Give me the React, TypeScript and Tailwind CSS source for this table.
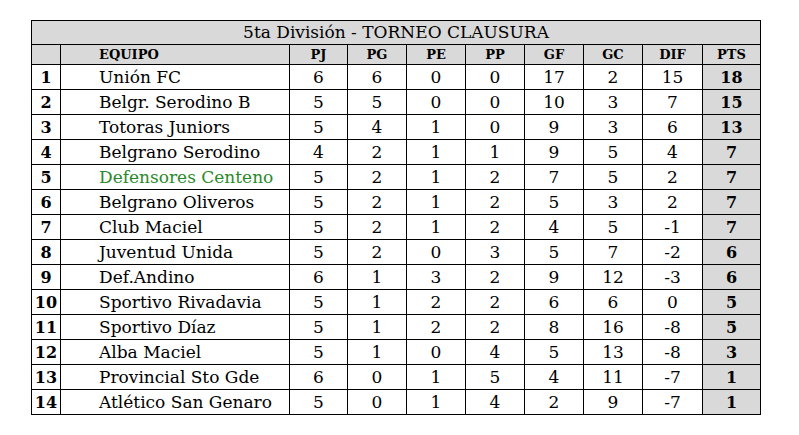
import React from "react";

type Row = [number, string, number, number, number, number, number, number, number, number, boolean?];

const rows: Row[] = [
  [1, "Unión FC", 6, 6, 0, 0, 17, 2, 15, 18],
  [2, "Belgr. Serodino B", 5, 5, 0, 0, 10, 3, 7, 15],
  [3, "Totoras Juniors", 5, 4, 1, 0, 9, 3, 6, 13],
  [4, "Belgrano Serodino", 4, 2, 1, 1, 9, 5, 4, 7],
  [5, "Defensores Centeno", 5, 2, 1, 2, 7, 5, 2, 7, true],
  [6, "Belgrano Oliveros", 5, 2, 1, 2, 5, 3, 2, 7],
  [7, "Club Maciel", 5, 2, 1, 2, 4, 5, -1, 7],
  [8, "Juventud Unida", 5, 2, 0, 3, 5, 7, -2, 6],
  [9, "Def.Andino", 6, 1, 3, 2, 9, 12, -3, 6],
  [10, "Sportivo Rivadavia", 5, 1, 2, 2, 6, 6, 0, 5],
  [11, "Sportivo Díaz", 5, 1, 2, 2, 8, 16, -8, 5],
  [12, "Alba Maciel", 5, 1, 0, 4, 5, 13, -8, 3],
  [13, "Provincial Sto Gde", 6, 0, 1, 5, 4, 11, -7, 1],
  [14, "Atlético San Genaro", 5, 0, 1, 4, 2, 9, -7, 1],
];

const headers = ["PJ", "PG", "PE", "PP", "GF", "GC", "DIF", "PTS"];

export default function App() {
  return (
    <div
      className="w-[799px] h-[435px] bg-white pt-[20px] pl-[31px]"
      style={{ fontFamily: '"DejaVu Serif", serif' }}
    >
      <div className="inline-grid grid-cols-[28px_228px_57px_58px_58px_58px_58px_58px_59px_57px] auto-rows-[24px] grid-rows-[23px_19px] gap-px bg-black p-px text-black">
        <div className="col-span-10 bg-[#d9d9d9] flex items-center justify-center text-[17px] leading-none">
          5ta División - TORNEO CLAUSURA
        </div>
        <div className="bg-[#d9d9d9]" />
        <div className="bg-[#d9d9d9] flex items-center pl-[38px] text-[13px] font-bold leading-none">
          EQUIPO
        </div>
        {headers.map((h) => (
          <div
            key={h}
            className="bg-[#d9d9d9] flex items-center justify-center text-[13px] font-bold leading-none"
          >
            {h}
          </div>
        ))}
        {rows.map((r) => (
          <React.Fragment key={r[0]}>
            <div className="bg-white flex items-center justify-center text-[16px] font-bold leading-none pt-px">
              {r[0]}
            </div>
            <div
              className={
                "bg-white flex items-center pl-[38px] text-[17px] leading-none whitespace-nowrap pt-px " +
                (r[10] ? "text-[#2a8a2a]" : "")
              }
            >
              {r[1]}
            </div>
            {r.slice(2, 9).map((v, i) => (
              <div
                key={i}
                className="bg-white flex items-center justify-center text-[17px] leading-none pt-px"
              >
                {v as number}
              </div>
            ))}
            <div className="bg-[#d9d9d9] flex items-center justify-center text-[16px] font-bold leading-none pt-px">
              {r[9]}
            </div>
          </React.Fragment>
        ))}
      </div>
    </div>
  );
}
